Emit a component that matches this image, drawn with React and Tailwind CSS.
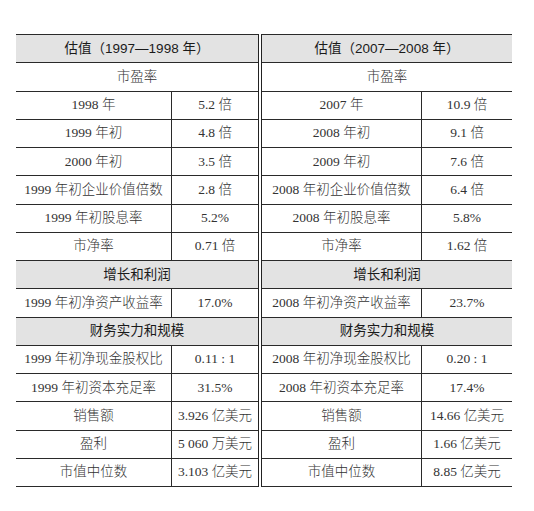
import React from "react";

const left = {
  title: "估值（1997—1998 年）",
  rows: [
    { sec: "市盈率", plain: true },
    ["1998 年", "5.2 倍"],
    ["1999 年初", "4.8 倍"],
    ["2000 年初", "3.5 倍"],
    ["1999 年初企业价值倍数", "2.8 倍"],
    ["1999 年初股息率", "5.2%"],
    ["市净率", "0.71 倍"],
    { sec: "增长和利润" },
    ["1999 年初净资产收益率", "17.0%"],
    { sec: "财务实力和规模" },
    ["1999 年初净现金股权比", "0.11 : 1"],
    ["1999 年初资本充足率", "31.5%"],
    ["销售额", "3.926 亿美元"],
    ["盈利", "5 060 万美元"],
    ["市值中位数", "3.103 亿美元"],
  ],
};

const right = {
  title: "估值（2007—2008 年）",
  rows: [
    { sec: "市盈率", plain: true },
    ["2007 年", "10.9 倍"],
    ["2008 年初", "9.1 倍"],
    ["2009 年初", "7.6 倍"],
    ["2008 年初企业价值倍数", "6.4 倍"],
    ["2008 年初股息率", "5.8%"],
    ["市净率", "1.62 倍"],
    { sec: "增长和利润" },
    ["2008 年初净资产收益率", "23.7%"],
    { sec: "财务实力和规模" },
    ["2008 年初净现金股权比", "0.20 : 1"],
    ["2008 年初资本充足率", "17.4%"],
    ["销售额", "14.66 亿美元"],
    ["盈利", "1.66 亿美元"],
    ["市值中位数", "8.85 亿美元"],
  ],
};

const serif = "font-['Liberation_Serif','Noto_Sans_CJK_SC',serif] font-light";
const sans = "font-['Liberation_Sans','Noto_Sans_CJK_SC',sans-serif] font-normal";

function Table({ data, firstW, className }) {
  return (
    <div className={`flex flex-col border-t-[1.5px] border-[#2a2a2a] ${className}`}>
      <div className={`h-[28.25px] flex items-center justify-center bg-[#e3e3e3] border-b-[1.5px] border-[#2a2a2a] text-[13.5px] text-[#1a1a1a] ${sans}`}>
        {data.title}
      </div>
      {data.rows.map((r, i) =>
        r.sec ? (
          <div
            key={i}
            className={`h-[28.25px] flex items-center justify-center border-b-[1.5px] border-[#2a2a2a] text-[13.5px] ${
              r.plain ? `bg-white text-[#333] ${serif}` : `bg-[#e3e3e3] text-[#1a1a1a] ${sans}`
            }`}
          >
            {r.sec}
          </div>
        ) : (
          <div key={i} className={`h-[28.25px] flex border-b-[1.5px] border-[#2a2a2a] text-[13.5px] text-[#333] ${serif}`}>
            <div className={`${firstW} flex items-center justify-center border-r-[1.5px] border-[#2a2a2a] whitespace-nowrap`}>
              {r[0]}
            </div>
            <div className="flex-1 flex items-center justify-center whitespace-nowrap">{r[1]}</div>
          </div>
        )
      )}
    </div>
  );
}

export default function App() {
  return (
    <div className="w-[534px] h-[511px] bg-white pt-[34px] pl-[16px]">
      <div className="flex gap-[2px]">
        <Table data={left} firstW="w-[156px]" className="w-[243px] border-r border-r-[#222]" />
        <Table data={right} firstW="w-[160px]" className="w-[251px] border-l border-l-[#222]" />
      </div>
    </div>
  );
}
